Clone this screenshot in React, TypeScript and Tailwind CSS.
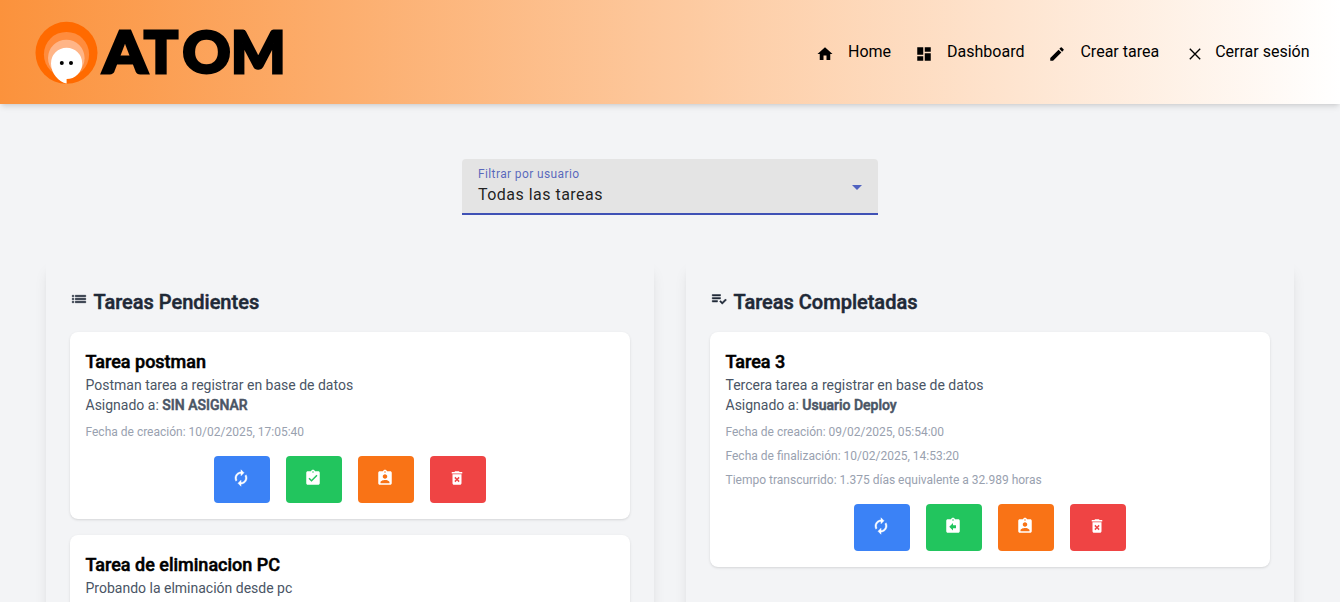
import type { ReactNode } from "react";
import {
  MdHome, MdDashboard, MdEdit, MdList, MdPlaylistAddCheck, MdAutorenew,
  MdAssignmentTurnedIn, MdAssignmentReturn, MdAssignmentInd, MdDeleteForever,
} from "react-icons/md";

type Task = {
  title: string;
  description: string;
  assignee?: string;
  dates: string[];
  done?: boolean;
};

const pending: Task[] = [
  { title: "Tarea postman", description: "Postman tarea a registrar en base de datos", assignee: "SIN ASIGNAR", dates: ["Fecha de creación: 10/02/2025, 17:05:40"] },
  { title: "Tarea de eliminacion PC", description: "Probando la elminación desde pc", dates: [] },
];

const completed: Task[] = [
  {
    title: "Tarea 3",
    description: "Tercera tarea a registrar en base de datos",
    assignee: "Usuario Deploy",
    dates: [
      "Fecha de creación: 09/02/2025, 05:54:00",
      "Fecha de finalización: 10/02/2025, 14:53:20",
      "Tiempo transcurrido: 1.375 días equivalente a 32.989 horas",
    ],
    done: true,
  },
];

function Logo() {
  return (
    <svg className="ml-[34px] h-[90px] w-[260px]" viewBox="34 7 260 90" role="img" aria-label="ATOM">
      <circle cx="66.5" cy="52.8" r="31" fill="#ff6a00" />
      <circle cx="66.5" cy="54.5" r="22.6" fill="#ff8c3d" />
      <circle cx="66.3" cy="58" r="18.3" fill="#ffb587" />
      <path d="M66.6 47.8a15.6 15.6 0 0 1 0 31.2v4.6C59 82 51 73.5 51 63.4a15.6 15.6 0 0 1 15.6-15.6Z" fill="#fff" />
      <circle cx="61.8" cy="63" r="2" />
      <circle cx="71" cy="63" r="2" />
      <g fontFamily="Lato, sans-serif" fontWeight="900" fontSize="58" stroke="#000" strokeWidth="3">
        <text x="103" y="73.4" textLength="44" lengthAdjust="spacingAndGlyphs">A</text>
        <text x="144" y="73.4" textLength="34" lengthAdjust="spacingAndGlyphs">T</text>
        <text x="182.5" y="73.4" textLength="48" lengthAdjust="spacingAndGlyphs">O</text>
        <text x="231" y="73.4" textLength="54.5" lengthAdjust="spacingAndGlyphs">M</text>
      </g>
    </svg>
  );
}

function CloseIcon() {
  return (
    <svg className="ml-[3px] -mr-[3px] h-[18px] w-[18px]" viewBox="0 0 18 18" fill="none" stroke="currentColor" strokeWidth="1.35">
      <path d="M3.8 3.8 14.2 14.2M14.2 3.8 3.8 14.2" />
    </svg>
  );
}

function NavItem({ icon, label }: { icon: ReactNode; label: string }) {
  return (
    <a className="flex items-center">
      <span className="mt-[5px] mr-[14px] text-[18px]">{icon}</span>
      {label}
    </a>
  );
}

function ActionButton({ className, children }: { className: string; children: ReactNode }) {
  return (
    <button className={`flex h-[47px] w-14 items-center justify-center rounded pr-px pb-[3px] text-[18px] text-white ${className}`}>
      {children}
    </button>
  );
}

function TaskCard({ task }: { task: Task }) {
  return (
    <article className="min-h-[187px] rounded-lg bg-white py-4 pr-4 pl-[15.5px] shadow">
      <h3 className="h-[27px] text-lg leading-7 font-medium text-black [-webkit-text-stroke:0.5px]">{task.title}</h3>
      <p className="text-sm text-gray-600">{task.description}</p>
      {task.assignee && (
        <>
          <p className="text-sm text-gray-600">
            Asignado a: <span className="font-medium [-webkit-text-stroke:0.5px]">{task.assignee}</span>
          </p>
          <div className="mt-[9px] flex flex-col gap-2">
            {task.dates.map((d) => (
              <p key={d} className="text-xs text-gray-400">{d}</p>
            ))}
          </div>
          <div className="mt-4 flex justify-center gap-4">
            <ActionButton className="bg-[#3b82f6]"><MdAutorenew className="[&>path:not([fill=none])]:[stroke-width:0.6px]" /></ActionButton>
            <ActionButton className="bg-[#22c55e]">{task.done ? <MdAssignmentReturn /> : <MdAssignmentTurnedIn />}</ActionButton>
            <ActionButton className="bg-[#f97316]"><MdAssignmentInd /></ActionButton>
            <ActionButton className="bg-[#ef4444]"><MdDeleteForever /></ActionButton>
          </div>
        </>
      )}
    </article>
  );
}

function Column({ icon, title, tasks }: { icon: ReactNode; title: string; tasks: Task[] }) {
  return (
    <section className="min-h-[500px] flex-1 rounded-lg px-6 pt-7 shadow-lg">
      <h2 className="mb-4 flex h-7 items-center text-xl font-medium text-[#1f2937]">
        <span className="-ml-[0.5px] mr-[6px] mb-[6px] text-[18px]">{icon}</span>
        <span className="[-webkit-text-stroke:0.5px]">{title}</span>
      </h2>
      <div className="flex flex-col gap-4">
        {tasks.map((t) => <TaskCard key={t.title} task={t} />)}
      </div>
    </section>
  );
}

export default function App() {
  return (
    <div className="h-[602px] overflow-hidden bg-[#f3f4f6] font-[Roboto,sans-serif]">
      <header className="flex h-[104px] items-center justify-between bg-[linear-gradient(to_right,#fb923c,#ffffff)] pr-[30.5px] text-black shadow-md">
        <Logo />
        <nav className="flex items-center gap-6 pb-px">
          <NavItem icon={<MdHome />} label="Home" />
          <NavItem icon={<MdDashboard />} label="Dashboard" />
          <NavItem icon={<MdEdit />} label="Crear tarea" />
          <NavItem icon={<CloseIcon />} label="Cerrar sesión" />
        </nav>
      </header>
      <main>
        <div className="mx-auto mt-[55px] flex h-14 w-[416px] items-center justify-between rounded-t border-b-2 border-[#3f51b5] bg-[#e4e4e4] pr-4 pl-4">
          <div>
            <p className="h-[18px] text-xs leading-[18px] tracking-[0.38px] text-[#3f51b5]/85">Filtrar por usuario</p>
            <p className="h-6 text-base leading-6 tracking-[0.48px] text-black/87">Todas las tareas</p>
          </div>
          <svg className="mt-[2px] h-[5px] w-[10px]" viewBox="0 0 10 5"><path d="M0 0h10L5 5z" fill="#5062c0" /></svg>
        </div>
        <div className="mt-[45px] flex gap-8 px-[46px]">
          <Column icon={<MdList className="[&>path:not([fill=none])]:[stroke-width:0.6px]" />} title="Tareas Pendientes" tasks={pending} />
          <Column icon={<MdPlaylistAddCheck className="[&>path:not([fill=none])]:[stroke-width:0.6px]" />} title="Tareas Completadas" tasks={completed} />
        </div>
      </main>
    </div>
  );
}
